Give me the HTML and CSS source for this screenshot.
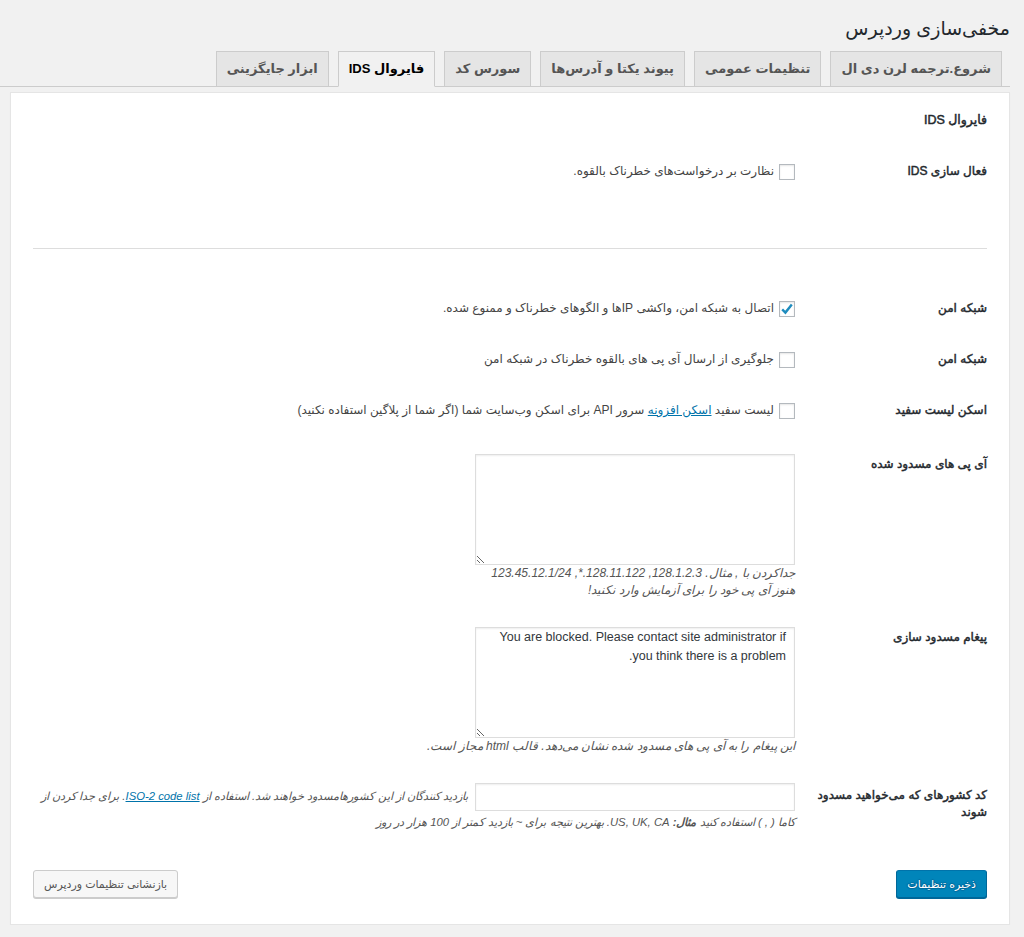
FILE: index.html
```html
<!DOCTYPE html>
<html lang="fa" dir="rtl">
<head>
    <meta charset="UTF-8">
    <title>مخفی‌سازی وردپرس</title>
    <link rel="stylesheet" href="styles.css">
</head>
<body>
<div class="wrap">
    <h1>مخفی‌سازی وردپرس</h1>

    <div class="nav-tabs">
        <a class="nav-tab">شروع.ترجمه لرن دی ال</a>
        <a class="nav-tab">تنظیمات عمومی</a>
        <a class="nav-tab">پیوند یکتا و آدرس‌ها</a>
        <a class="nav-tab">سورس کد</a>
        <a class="nav-tab nav-tab-active">فایروال IDS</a>
        <a class="nav-tab">ابزار جایگزینی</a>
    </div>

    <div class="panel">
        <h3>فایروال IDS</h3>

        <div class="row">
            <div class="row-label">فعال سازی IDS</div>
            <div class="row-field">
                <label class="check"><span class="box"></span>نظارت بر درخواست‌های خطرناک بالقوه.</label>
            </div>
        </div>

        <hr>

        <div class="row">
            <div class="row-label">شبکه امن</div>
            <div class="row-field">
                <label class="check">
                    <span class="box">
                        <svg width="16" height="16" viewBox="0 0 16 16"><path d="M3.2 8.4 L6.4 11.6 L12.8 3.6" fill="none" stroke="#1e8cbe" stroke-width="2.4"/></svg>
                    </span>اتصال به شبکه امن، واکشی IPها و الگوهای خطرناک و ممنوع شده.
                </label>
            </div>
        </div>

        <div class="row">
            <div class="row-label">شبکه امن</div>
            <div class="row-field">
                <label class="check"><span class="box"></span>جلوگیری از ارسال آی پی های بالقوه خطرناک در شبکه امن</label>
            </div>
        </div>

        <div class="row">
            <div class="row-label">اسکن لیست سفید</div>
            <div class="row-field">
                <label class="check"><span class="box"></span><span>لیست سفید <a href="#">اسکن افزونه</a> سرور API برای اسکن وب‌سایت شما (اگر شما از پلاگین استفاده نکنید)</span></label>
            </div>
        </div>

        <div class="row row-area">
            <div class="row-label">آی پی های مسدود شده</div>
            <div class="row-field">
                <textarea class="area"></textarea>
                <p class="description">جداکردن با , مثال. 128.1.2.3, 128.11.122.*, 123.45.12.1/24<br>هنوز آی پی خود را برای آزمایش وارد نکنید!</p>
            </div>
        </div>

        <div class="row row-area">
            <div class="row-label">پیغام مسدود سازی</div>
            <div class="row-field">
                <textarea class="area area-en">You are blocked. Please contact site administrator if you think there is a problem.</textarea>
                <p class="description">این پیغام را به آی پی های مسدود شده نشان می‌دهد. قالب html مجاز است.</p>
            </div>
        </div>

        <div class="row row-countries">
            <div class="row-label">کد کشورهای که می‌خواهید مسدود شوند</div>
            <div class="row-field">
                <input type="text" class="text-input"><span class="description">بازدید کنندگان از این کشورهامسدود خواهند شد. استفاده از <a href="#">ISO-2 code list</a>. برای جدا کردن از کاما ( , ) استفاده کنید <b>مثال:</b> US, UK, CA. بهترین نتیجه برای ~ بازدید کمتر از 100 هزار در روز</span>
            </div>
        </div>

        <div class="actions">
            <button class="button button-primary">ذخیره تنظیمات</button>
            <button class="button">بازنشانی تنظیمات وردپرس</button>
        </div>
    </div>
</div>
</body>
</html>
```

FILE: styles.css
```css
body {
    margin: 0;
    background-color: #f1f1f1;
    color: #444;
    font-family: "Liberation Sans", "DejaVu Sans", sans-serif;
    font-size: 12px;
    direction: rtl;
}
.wrap {
    margin-right: 14px;
    padding-top: 14px;
}
h1 {
    margin: 0 0 8px 2px;
    font-size: 19px;
    font-weight: 400;
    line-height: 29px;
    color: #23282d;
}

/* تب ها */
.nav-tabs {
    display: flex;
    gap: 9px;
    padding-right: 8px;
    border-bottom: 1px solid #ccc;
    margin-bottom: 5px;
}
.nav-tab {
    padding: 5px 10px;
    font-size: 13px;
    font-weight: 700;
    line-height: 24px;
    background-color: #e5e5e5;
    color: #555;
    text-decoration: none;
    border: 1px solid #ccc;
    border-bottom: none;
    white-space: nowrap;
}
.nav-tab-active {
    background-color: #f1f1f1;
    color: #000;
    border-bottom: 1px solid #f1f1f1;
    margin-bottom: -1px;
}

/* پنل تنظیمات */
.panel {
    margin-left: 10px;
    padding: 0 22px 26px;
    background-color: #fff;
    border: 1px solid #e5e5e5;
    box-shadow: 0 1px 1px rgba(0,0,0,0.04);
}
.panel h3 {
    margin: 17px 0 16px;
    font-size: 12.5px;
    font-weight: 400;
    -webkit-text-stroke: 0.5px #23282d;
    line-height: 20px;
    color: #23282d;
}
.panel hr {
    margin: 51px 0 34px;
    border: 0;
    border-top: 1px solid #ddd;
}
.row {
    display: flex;
    padding: 15px 0;
}
.row-label {
    width: 180px;
    padding-left: 12px;
    flex: none;
    font-size: 12px;
    font-weight: 400;
    -webkit-text-stroke: 0.45px #23282d;
    line-height: 21px;
    color: #23282d;
}
.row-field {
    flex: 1;
    line-height: 21px;
}
.check {
    display: flex;
    align-items: center;
}
.box {
    display: inline-block;
    width: 16px;
    height: 16px;
    margin-left: 5px;
    flex: none;
    border: 1px solid #b4b9be;
    box-sizing: border-box;
    background-color: #fff;
    box-shadow: inset 0 1px 2px rgba(0,0,0,0.1);
}
.box svg {
    display: block;
    margin: -1px;
}
a {
    color: #0073aa;
    text-decoration: underline;
}

.row-area {
    padding: 18px 0 10px;
}
.area {
    display: block;
    width: 320px;
    height: 111px;
    margin: 0;
    padding: 0 8px;
    box-sizing: border-box;
    border: 1px solid #ddd;
    box-shadow: inset 0 1px 2px rgba(0,0,0,0.07);
    font-family: "Liberation Sans", sans-serif;
    font-size: 12.5px;
    line-height: 19px;
    color: #32373c;
}
.description {
    margin: 0;
    font-size: 12px;
    font-style: italic;
    line-height: 17px;
    color: #555;
}
.description b {
    font-weight: 700;
}

.row-countries {
    padding-top: 18px;
}
.row-countries .row-label {
    line-height: 17px;
    margin-top: 4px;
}
.row-countries .row-field {
    line-height: 22px;
}
.row-countries .description {
    font-size: 11.3px;
    line-height: 22px;
}
.text-input {
    width: 320px;
    height: 28px;
    margin: 0 0 0 7px;
    padding: 3px 5px;
    box-sizing: border-box;
    border: 1px solid #ddd;
    box-shadow: inset 0 1px 2px rgba(0,0,0,0.07);
    vertical-align: middle;
}

/* دکمه ها */
.actions {
    display: flex;
    justify-content: space-between;
    margin-top: 22px;
}
.button {
    height: 28px;
    padding: 0 10px 1px;
    font-family: "Liberation Sans", "DejaVu Sans", sans-serif;
    font-size: 11px;
    line-height: 26px;
    color: #555;
    background-color: #f7f7f7;
    border: 1px solid #ccc;
    border-radius: 3px;
    box-shadow: 0 1px 0 #ccc;
    cursor: pointer;
}
.button-primary {
    color: #fff;
    background-color: #0085ba;
    border-color: #0073aa #006799 #006799;
    box-shadow: 0 1px 0 #006799;
    text-shadow: 0 -1px 1px #006799, 1px 0 1px #006799, 0 1px 1px #006799, -1px 0 1px #006799;
}
```
